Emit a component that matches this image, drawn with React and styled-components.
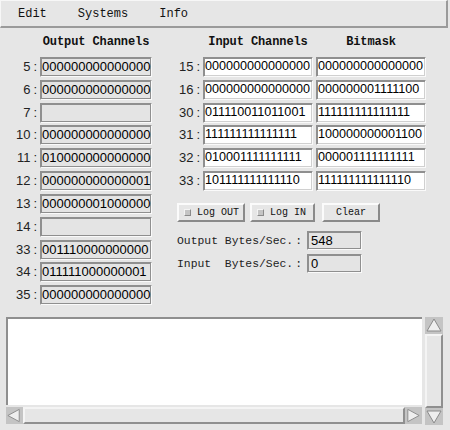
import React from "react";
import styled, { createGlobalStyle } from "styled-components";

const GlobalStyle = createGlobalStyle`
  html, body {
    margin: 0;
    padding: 0;
    background: #e6e6e6;
  }
`;

const Window = styled.div`
  width: 450px;
  height: 430px;
  background: #e6e6e6;
  overflow: hidden;
  font-family: "Liberation Sans", Arial, sans-serif;
  color: #111;
`;

const MenuBar = styled.div`
  box-sizing: border-box;
  width: 448px;
  height: 28px;
  display: flex;
  align-items: center;
  gap: 31px;
  padding-left: 17px;
  border-top: 1px solid #f7f7f7;
  border-left: 1px solid #f7f7f7;
  border-bottom: 2px solid #9a9a9a;
  border-right: 2px solid #9a9a9a;
  font-family: "Liberation Mono", "Courier New", monospace;
  font-size: 12px;
`;

const Main = styled.div`
  display: flex;
  gap: 25px;
`;

const Column = styled.div`
  display: flex;
  flex-direction: column;
`;

const ChannelGrid = styled.div`
  display: grid;
  grid-template-columns: ${(p) => p.$cols};
  column-gap: 3px;
  row-gap: 2.85px;
  align-items: center;
`;

const Header = styled.div`
  margin-top: 6px;
  margin-bottom: 4px;
  height: 16px;
  line-height: 16px;
  text-align: center;
  font-family: "Liberation Mono", "Courier New", monospace;
  font-weight: bold;
  font-size: 12px;
  letter-spacing: -0.1px;
`;

const Label = styled.div`
  text-align: right;
  font-size: 13px;
  line-height: 20px;
  color: #222;
  white-space: nowrap;
`;

const Colon = styled.span`
  margin-left: ${(p) => p.$gap ?? 3}px;
`;

const Field = styled.div`
  box-sizing: border-box;
  height: 20px;
  padding-left: 1px;
  font-size: ${(p) => (p.$white ? 12.6 : 13)}px;
  line-height: 17px;
  white-space: nowrap;
  overflow: hidden;
  border: 1px solid;
  border-color: #8f8f8f #fafafa #fafafa #8f8f8f;
  background: ${(p) => (p.$white ? "#ffffff" : "#e4e4e4")};
  box-shadow: ${(p) =>
    p.$white
      ? "inset 1px 1px 0 #8f8f8f, inset -1px -1px 0 #d0d0d0"
      : "inset 1px 1px 0 #8f8f8f, inset -1px -1px 0 #8f8f8f"};
  color: #000;
`;

const ButtonRow = styled.div`
  display: flex;
  gap: 5px;
  margin-top: 12px;
`;

const Button = styled.div`
  box-sizing: border-box;
  width: ${(p) => p.$w}px;
  height: 19px;
  margin-left: ${(p) => p.$ml || 0}px;
  display: flex;
  align-items: center;
  justify-content: ${(p) => (p.$indicator ? "flex-start" : "center")};
  padding-left: ${(p) => (p.$indicator ? 5 : 0)}px;
  gap: 6px;
  border: 2px solid;
  border-color: #fbfbfb #8a8a8a #8a8a8a #fbfbfb;
  font-family: "Liberation Mono", "Courier New", monospace;
  font-size: 10px;
  color: #111;
`;

const Indicator = styled.span`
  width: 5px;
  height: 5px;
  background: #c4c4c4;
  border: 1px solid;
  border-color: #f4f4f4 #8a8a8a #8a8a8a #f4f4f4;
`;

const StatList = styled.div`
  display: flex;
  flex-direction: column;
  gap: 4px;
  margin-top: 9px;
`;

const StatRow = styled.div`
  display: flex;
  align-items: center;
`;

const StatLabel = styled.span`
  flex: none;
  width: 130px;
  font-family: "Liberation Mono", "Courier New", monospace;
  font-size: 11.4px;
  white-space: pre;
  color: #222;
`;

const StatField = styled(Field)`
  width: 55px;
  height: 19px;
  padding-left: 3px;
`;

const LogArea = styled.div`
  display: flex;
  gap: 3px;
  margin: 12px 0 0 6px;
`;

const LogLeft = styled.div`
  display: flex;
  flex-direction: column;
  gap: 2px;
  width: 416px;
`;

const LogText = styled.div`
  box-sizing: border-box;
  height: 88px;
  background: #fff;
  border-top: 2px solid #8f8f8f;
  border-left: 2px solid #8f8f8f;
`;

const HScroll = styled.div`
  display: flex;
  height: 17px;
`;

const VScroll = styled.div`
  display: flex;
  flex-direction: column;
  width: 18px;
  height: 108px;
`;

const Arrow = styled.div`
  flex: none;
  width: ${(p) => (p.$vertical ? 18 : 17)}px;
  height: 17px;
  display: flex;
  align-items: center;
  justify-content: center;
  background: #c4c4c4;
`;

const Thumb = styled.div`
  flex: 1;
  box-sizing: border-box;
  background: #e6e6e6;
  border: 2px solid;
  border-color: #f4f4f4 #8f8f8f #8f8f8f #f4f4f4;
`;

const arrowPoints = {
  left: "14,2 14,15 2,8.5",
  right: "3,2 3,15 15,8.5",
  up: "2,14 16,14 9,2",
  down: "2,3 16,3 9,15",
};

const ArrowIcon = ({ dir }) => (
  <svg width="18" height="17" viewBox="0 0 18 17">
    <polygon
      points={arrowPoints[dir]}
      fill="#eeeeee"
      stroke="#8a8a8a"
      strokeWidth="1"
    />
  </svg>
);

const outputChannels = [
  ["5", "000000000000000"],
  ["6", "000000000000000"],
  ["7", ""],
  ["10", "000000000000000"],
  ["11", "010000000000000"],
  ["12", "000000000000001"],
  ["13", "000000001000000"],
  ["14", ""],
  ["33", "001110000000000"],
  ["34", "011111000000001"],
  ["35", "000000000000000"],
];

const inputChannels = [
  ["15", "000000000000000", "000000000000000"],
  ["16", "000000000000000", "000000001111100"],
  ["30", "011110011011001", "111111111111111"],
  ["31", "111111111111111", "100000000001100"],
  ["32", "010001111111111", "000001111111111"],
  ["33", "101111111111110", "111111111111110"],
];

const ChannelLabel = ({ n }) => (
  <Label>
    {n}
    <Colon>:</Colon>
  </Label>
);

export default function App() {
  return (
    <Window>
      <GlobalStyle />
      <MenuBar>
        <span>Edit</span>
        <span>Systems</span>
        <span>Info</span>
      </MenuBar>

      <Main>
        <Column>
          <ChannelGrid $cols="37px 112px">
            <span />
            <Header>Output Channels</Header>
            {outputChannels.map(([n, v]) => (
              <React.Fragment key={n}>
                <ChannelLabel n={n} />
                <Field>{v}</Field>
              </React.Fragment>
            ))}
          </ChannelGrid>
        </Column>

        <Column>
          <ChannelGrid $cols="23px 110px 110px">
            <span />
            <Header>Input Channels</Header>
            <Header>Bitmask</Header>
            {inputChannels.map(([n, v, m]) => (
              <React.Fragment key={n}>
                <ChannelLabel n={n} />
                <Field $white>{v}</Field>
                <Field $white>{m}</Field>
              </React.Fragment>
            ))}
          </ChannelGrid>

          <ButtonRow>
            <Button $w={68} $indicator>
              <Indicator />
              Log OUT
            </Button>
            <Button $w={65} $indicator>
              <Indicator />
              Log IN
            </Button>
            <Button $w={58} $ml={2}>
              Clear
            </Button>
          </ButtonRow>

          <StatList>
            <StatRow>
              <StatLabel>
                Output Bytes/Sec.<Colon $gap={2}>:</Colon>
              </StatLabel>
              <StatField>548</StatField>
            </StatRow>
            <StatRow>
              <StatLabel>
                Input  Bytes/Sec.<Colon $gap={2}>:</Colon>
              </StatLabel>
              <StatField>0</StatField>
            </StatRow>
          </StatList>
        </Column>
      </Main>

      <LogArea>
        <LogLeft>
          <LogText />
          <HScroll>
            <Arrow>
              <ArrowIcon dir="left" />
            </Arrow>
            <Thumb />
            <Arrow>
              <ArrowIcon dir="right" />
            </Arrow>
          </HScroll>
        </LogLeft>
        <VScroll>
          <Arrow $vertical>
            <ArrowIcon dir="up" />
          </Arrow>
          <Thumb />
          <Arrow $vertical>
            <ArrowIcon dir="down" />
          </Arrow>
        </VScroll>
      </LogArea>
    </Window>
  );
}
